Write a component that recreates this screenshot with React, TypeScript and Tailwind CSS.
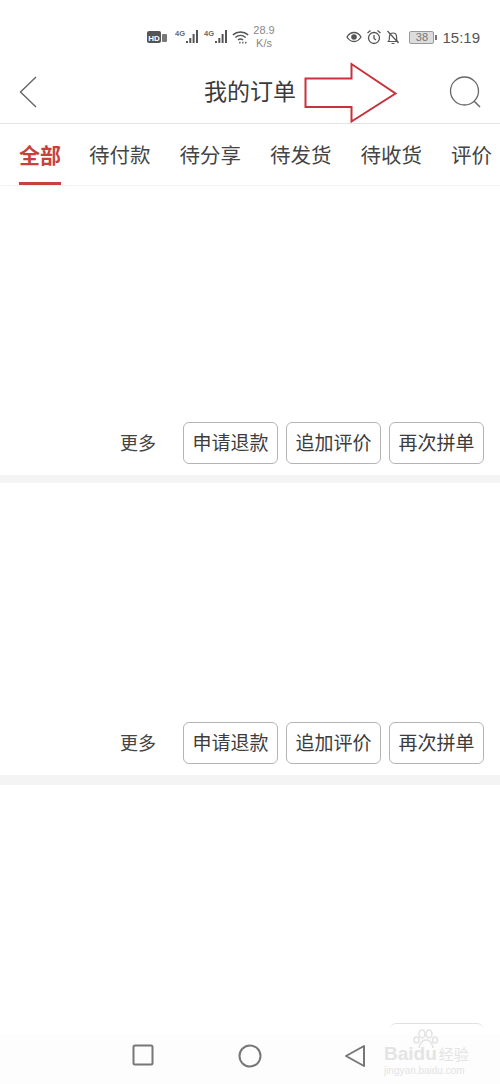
const font = { fontFamily: '"Noto Sans CJK SC", "Liberation Sans", sans-serif' };

function StatusBar() {
  return (
    <div className="flex h-[55px] items-center justify-between pl-[147px] pr-[20px] pt-[19px] text-[#555]">
      <div className="flex items-center">
        <svg width="20" height="14" viewBox="0 0 20 14">
          <rect x="0" y="1" width="14" height="12" rx="2" fill="#555" />
          <text x="7" y="10.500" textAnchor="middle" fontSize="8" fontWeight="700" fill="#fff" fontFamily="Liberation Sans">HD</text>
          <rect x="15" y="4" width="5" height="8" rx="1" fill="#777" />
        </svg>
        {[0, 1].map((i) => (
          <svg key={i} width="24" height="18" viewBox="0 0 24 18" className={i === 0 ? "ml-[8px]" : "ml-[5px]"}>
            <text x="0" y="8" fontSize="7.500" fontWeight="700" fill="#666" fontFamily="Liberation Sans">4G</text>
            <path d="M12 15v-2M15.300 15v-5M18.600 15V6M22 15V2" stroke="#555" strokeWidth="2" fill="none" />
          </svg>
        ))}
        <svg width="17" height="16" viewBox="0 0 20 16" className="ml-[4px]">
          <path d="M1 5.500C6 1 14 1 19 5.500M4 8.500c3.500-3 8.500-3 12 0M7 11.500c1.800-1.500 4.200-1.500 6 0" stroke="#555" strokeWidth="1.700" fill="none" />
          <path d="M8.500 14.500h1.500M12 14.500h1.500M15.500 14.500h1.500" stroke="#555" strokeWidth="2" />
        </svg>
        <div className="ml-[2px] flex w-[26px] flex-col items-center text-[11px] leading-[13px] text-[#888]" style={{ fontFamily: '"Liberation Sans", sans-serif' }}>
          <span>28.9</span>
          <span>K/s</span>
        </div>
      </div>
      <div className="flex items-center">
        <svg width="16" height="12" viewBox="0 0 16 12">
          <path d="M1 6c3.500-6 10.500-6 14 0c-3.500 6-10.500 6-14 0z" stroke="#555" strokeWidth="1.300" fill="none" />
          <circle cx="8" cy="6" r="2.800" fill="#555" />
        </svg>
        <svg width="16" height="16" viewBox="0 0 16 16" className="ml-[4px]">
          <circle cx="8" cy="9" r="5.500" stroke="#555" strokeWidth="1.300" fill="none" />
          <path d="M8 6v3.500l2 1.500M1.500 4l3-2.500M14.500 4l-3-2.500" stroke="#555" strokeWidth="1.300" fill="none" />
        </svg>
        <svg width="16" height="16" viewBox="0 0 16 16" className="ml-[3px]">
          <path d="M3.500 12.500c1-1 1-2.500 1-5a3.500 3.500 0 0 1 7 0c0 2.500 0 4 1 5zM6.500 14.500h3M2.500 2l11 12" stroke="#555" strokeWidth="1.200" fill="none" />
        </svg>
        <div className="ml-[8px] flex h-[13px] w-[25px] items-center justify-center rounded-[2px] border border-[#999] bg-[#ddd] text-[11px] leading-none text-[#777]" style={{ fontFamily: '"Liberation Sans", sans-serif' }}>
          38
        </div>
        <div className="ml-[1px] h-[5px] w-[2px] bg-[#777]" />
        <span className="ml-[5px] text-[15px] leading-none text-[#555]" style={{ fontFamily: '"Liberation Sans", sans-serif' }}>15:19</span>
      </div>
    </div>
  );
}

function Header() {
  return (
    <div className="relative flex h-[69px] items-center justify-between border-b border-[#e4e4e4] pl-[19px] pr-[18px] pt-[6px]">
      <svg width="18" height="32" viewBox="0 0 18 32">
        <path d="M17 1L1.500 16l15.500 15" stroke="#666" strokeWidth="1.400" fill="none" />
      </svg>
      <h1 className="absolute left-[204px] top-[20px] text-[23px] font-normal leading-[30px] text-[#3a3a3a]">我的订单</h1>
      <svg width="33" height="33" viewBox="0 0 33 33">
        <circle cx="15.500" cy="15" r="14" stroke="#666" strokeWidth="1.300" fill="none" />
        <path d="M25 25l6 6" stroke="#666" strokeWidth="1.500" fill="none" />
      </svg>
      <svg width="94" height="62" viewBox="0 0 94 62" className="absolute left-[304px] top-[7px]">
        <path d="M1.500 16.500H47.500V2L91.500 31.500L47.500 59.500V45H1.500Z" stroke="#c8323c" strokeWidth="2" fill="#fff" />
      </svg>
    </div>
  );
}

const tabs = ["全部", "待付款", "待分享", "待发货", "待收货", "评价"];

function Tabs() {
  return (
    <div className="flex h-[62px] gap-[29px] overflow-hidden border-b border-[#f2f2f2] pl-[19px]">
      {tabs.map((t, i) => (
        <div
          key={t}
          className={
            i === 0
              ? "mr-[-1px] flex h-full shrink-0 items-center border-b-[3px] border-[#c8413a] pt-[3px] text-[21px] font-bold text-[#c8413a]"
              : "flex h-full shrink-0 items-center border-b-[3px] border-transparent pt-[3px] text-[20.500px] text-[#444]"
          }
        >
          {t}
        </div>
      ))}
    </div>
  );
}

const buttons = ["申请退款", "追加评价", "再次拼单"];

function OrderCard({ blank }: { blank: string }) {
  return (
    <div>
      <div className={blank} />
      <div className="flex h-[64px] items-start justify-end gap-[8px] pr-[16px] pt-[11px]">
        <span className="mr-[19px] text-[18px] leading-[41px] text-[#444]">更多</span>
        {buttons.map((b) => (
          <button
            key={b}
            type="button"
            className="h-[42px] w-[95px] rounded-[6px] border border-[#b4b4b4] bg-white pb-[2px] text-[19px] text-[#3c3c3c]"
          >
            {b}
          </button>
        ))}
      </div>
    </div>
  );
}

function NavBar() {
  return (
    <div className="relative flex h-[49px] items-start bg-[#fdfdfd] pl-[132px] pt-[9px]">
      <svg width="22" height="22" viewBox="0 0 22 22">
        <rect x="1.500" y="1.500" width="19" height="19" rx="1.500" stroke="#777" strokeWidth="2" fill="none" />
      </svg>
      <svg width="24" height="24" viewBox="0 0 24 24" className="ml-[84px]">
        <circle cx="12" cy="12" r="10.500" stroke="#777" strokeWidth="2" fill="none" />
      </svg>
      <svg width="22" height="24" viewBox="0 0 22 24" className="ml-[82px]">
        <path d="M20 2L2 12l18 10z" stroke="#777" strokeWidth="2" strokeLinejoin="round" fill="none" />
      </svg>
      {/* watermark */}
      <svg width="26" height="22" viewBox="0 0 26 22" className="absolute left-[413px] top-[-6px]">
        <g fill="none" stroke="#e2e2e2" strokeWidth="1.500">
          <ellipse cx="9" cy="5" rx="3" ry="4" />
          <ellipse cx="16" cy="5" rx="3" ry="4" />
          <ellipse cx="3.500" cy="11" rx="2.500" ry="3" />
          <ellipse cx="22" cy="11" rx="2.500" ry="3" />
          <path d="M6 19c1-6 4-8 7-8s6 2 7 8" />
        </g>
      </svg>
      <div className="absolute left-[384px] top-[9px] flex flex-col items-start text-[#e4e4e4]">
        <span className="text-[19px] font-bold leading-[20px]" style={{ fontFamily: '"Liberation Sans", sans-serif' }}>
          Baidu<span className="ml-[2px] text-[15px] font-normal" style={font}>经验</span>
        </span>
        <span className="text-[10px] leading-[14px]" style={{ fontFamily: '"Liberation Sans", sans-serif' }}>jingyan.baidu.com</span>
      </div>
    </div>
  );
}

export default function App() {
  return (
    <div className="flex h-[1084px] w-[500px] flex-col overflow-hidden bg-white" style={font}>
      <StatusBar />
      <Header />
      <Tabs />
      <OrderCard blank="h-[225px]" />
      <div className="h-[8px] bg-[#f4f4f4]" />
      <OrderCard blank="h-[228px]" />
      <div className="h-[10px] bg-[#f4f4f4]" />
      <div className="flex flex-1 items-end justify-end pr-[17px]">
        <div className="h-[12px] w-[93px] rounded-t-[6px] border-t border-[#e0e0e0]" />
      </div>
      <NavBar />
    </div>
  );
}
